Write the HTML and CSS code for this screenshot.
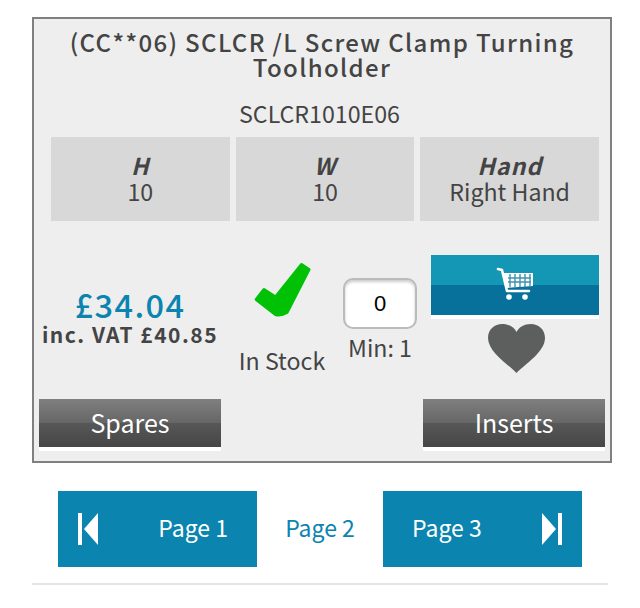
FILE: index.html
```html
<!DOCTYPE html>
<html lang="en">
<head>
    <meta charset="UTF-8">
    <title>SCLCR Screw Clamp Turning Toolholder</title>
    <link rel="stylesheet" href="styles.css">
</head>
<body>
    <div class="product-card">
        <h2 class="product-title">(CC**06) SCLCR /L Screw Clamp Turning Toolholder</h2>
        <p class="part-number">SCLCR1010E06</p>

        <div class="spec-row">
            <div class="spec-cell"><em>H</em><span>10</span></div>
            <div class="spec-cell"><em>W</em><span>10</span></div>
            <div class="spec-cell"><em>Hand</em><span>Right Hand</span></div>
        </div>

        <div class="buy-row">
            <div class="price-col">
                <div class="price">£34.04</div>
                <div class="price-vat">inc. VAT £40.85</div>
            </div>
            <div class="stock-col">
                <svg class="tick-icon" viewBox="0 0 57 55">
                    <path d="M2.2 37.5 L10 27.5 L21.5 35 L47.5 2.5 L55 7.5 L33 50.5 Q27 54 21.5 52.5 Z" fill="#00c106" stroke="#00c106" stroke-width="3" stroke-linejoin="round"/>
                </svg>
                <div class="stock-text">In Stock</div>
            </div>
            <div class="qty-col">
                <input class="qty-input" type="text" value="0">
                <div class="qty-min">Min: 1</div>
            </div>
            <div class="basket-col">
                <button class="basket-btn">
                    <svg class="cart-icon" viewBox="0 0 38 34">
                        <path d="M2 2 L6 3 L11 24 H33" fill="none" stroke="#fff" stroke-width="2.6" stroke-linecap="round" stroke-linejoin="round"/>
                        <path d="M7 6 H37 V19 L10 21 Z" fill="#fff"/>
                        <path d="M12 11 H35 M12 15 H35 M14 7 V20 M19 7 V20 M24 7 V20 M29 7 V20 M34 7 V20" stroke="#3f93b1" stroke-width="1.4"/>
                        <circle cx="13" cy="30" r="2.8" fill="#fff"/>
                        <circle cx="29" cy="30" r="2.8" fill="#fff"/>
                    </svg>
                </button>
                <svg class="heart-icon" viewBox="0 0 57 49">
                    <path d="M28.5 49 C20 40 0 28 0 14 C0 5 7 0 14 0 C21 0 26 3 28.5 8 C31 3 36 0 43 0 C50 0 57 5 57 14 C57 28 37 40 28.5 49 Z" fill="#5d5f5e"/>
                </svg>
            </div>
        </div>

        <div class="link-row">
            <a class="dark-btn">Spares</a>
            <a class="dark-btn">Inserts</a>
        </div>
    </div>

    <div class="pager">
        <a class="pager-btn">
            <svg class="pager-icon" viewBox="0 0 20 32"><path d="M0 0 H4 V32 H0 Z M20 0 V32 L6 16 Z" fill="#fff"/></svg>
            <span class="pager-text">Page 1</span>
        </a>
        <span class="pager-text pager-current">Page 2</span>
        <a class="pager-btn pager-next">
            <span class="pager-text">Page 3</span>
            <svg class="pager-icon" viewBox="0 0 20 32"><path d="M20 0 H16 V32 H20 Z M0 0 V32 L14 16 Z" fill="#fff"/></svg>
        </a>
    </div>

    <hr class="rule">
</body>
</html>
```

FILE: styles.css
```css
body {
    font-family: "Noto Sans CJK SC", "Open Sans", sans-serif;
    margin: 0;
    padding: 17px 32px 0;
    color: #444;
    background: #fff;
}

.product-card {
    box-sizing: border-box;
    width: 580px;
    height: 446px;
    padding: 10px 5px 0;
    background-color: #eee;
    border: 2px solid #808080;
}

.product-title {
    margin: 0 auto;
    width: 530px;
    font-size: 24px;
    line-height: 25px;
    font-weight: 500;
    letter-spacing: 1.35px;
    text-align: center;
}

.part-number {
    margin: 20px 0 10px;
    padding-right: 5px;
    font-size: 23.2px;
    line-height: 28px;
    text-align: center;
}

.spec-row {
    display: flex;
    gap: 6px;
    margin: 0 6px 0 12px;
}

.spec-cell {
    flex: 1;
    height: 84px;
    padding-top: 15px;
    box-sizing: border-box;
    display: flex;
    flex-direction: column;
    align-items: center;
    background-color: #d8d8d8;
    font-size: 23.2px;
    line-height: 26px;
}

.spec-cell em {
    font-weight: 700;
    letter-spacing: 1px;
}

.buy-row {
    display: grid;
    grid-template-columns: 182px 122px 74px 6px 182px;
    height: 144px;
    margin-top: 34px;
}

.price-col {
    padding-top: 31px;
    text-align: center;
}

.price {
    font-size: 32.5px;
    line-height: 36px;
    font-weight: 500;
    letter-spacing: 1.4px;
    color: #0b84b0;
}

.price-vat {
    font-size: 21px;
    line-height: 24px;
    font-weight: 700;
    letter-spacing: 1.5px;
    white-space: nowrap;
}

.stock-col {
    padding-top: 7px;
    text-align: center;
}

.tick-icon {
    display: block;
    width: 57px;
    height: 55px;
    margin: 0 auto;
}

.stock-text {
    margin-top: 29px;
    font-size: 23.2px;
    line-height: 28px;
}

.qty-col {
    padding-top: 23px;
    text-align: center;
    grid-column: 3;
}

.qty-input {
    display: block;
    box-sizing: border-box;
    width: 74px;
    height: 51px;
    border: 2px solid #bbb;
    border-radius: 10px;
    background: #fff;
    box-shadow: inset 0 2px 3px #ccc;
    font-family: "Liberation Sans", sans-serif;
    font-size: 22px;
    color: #000;
    text-align: center;
}

.qty-min {
    margin-top: 4px;
    font-size: 23.2px;
    line-height: 28px;
}

.basket-col {
    grid-column: 5;
    display: flex;
    flex-direction: column;
    align-items: center;
}

.basket-btn {
    display: flex;
    justify-content: center;
    align-items: center;
    width: 168px;
    height: 64px;
    margin-left: 2px;
    padding: 0 0 4px;
    border: 0;
    border-bottom: 4px solid #fff;
    box-sizing: border-box;
    background: linear-gradient(#1496b5 50%, #07709b 50%);
}

.cart-icon {
    width: 38px;
    height: 34px;
    margin-bottom: -2px;
}

.heart-icon {
    width: 57px;
    height: 49px;
    margin-top: 5px;
    margin-left: 4px;
}

.link-row {
    display: flex;
    justify-content: space-between;
}

.dark-btn {
    width: 182px;
    height: 52px;
    box-sizing: border-box;
    border-bottom: 4px solid #fff;
    background: linear-gradient(#7f7f7f, #666 50%, #575757 50%, #464646);
    color: #fff;
    font-size: 25px;
    line-height: 46px;
    text-align: center;
}

.pager {
    display: flex;
    justify-content: center;
    align-items: center;
    margin: 28px 0 0;
}

.pager-btn {
    box-sizing: border-box;
    width: 199px;
    height: 76px;
    padding: 0 29px 0 20px;
    display: flex;
    justify-content: space-between;
    align-items: center;
    background-color: #0b84b0;
    color: #fff;
}

.pager-next {
    padding: 0 20px 0 29px;
}

.pager-icon {
    width: 20px;
    height: 32px;
}

.pager-text {
    padding-bottom: 4px;
    font-size: 23px;
}

.pager-current {
    width: 126px;
    text-align: center;
    color: #0b84b0;
}

.rule {
    margin: 16px 0 0;
    height: 2px;
    border: 0;
    background-color: #e5e5e5;
}
```
